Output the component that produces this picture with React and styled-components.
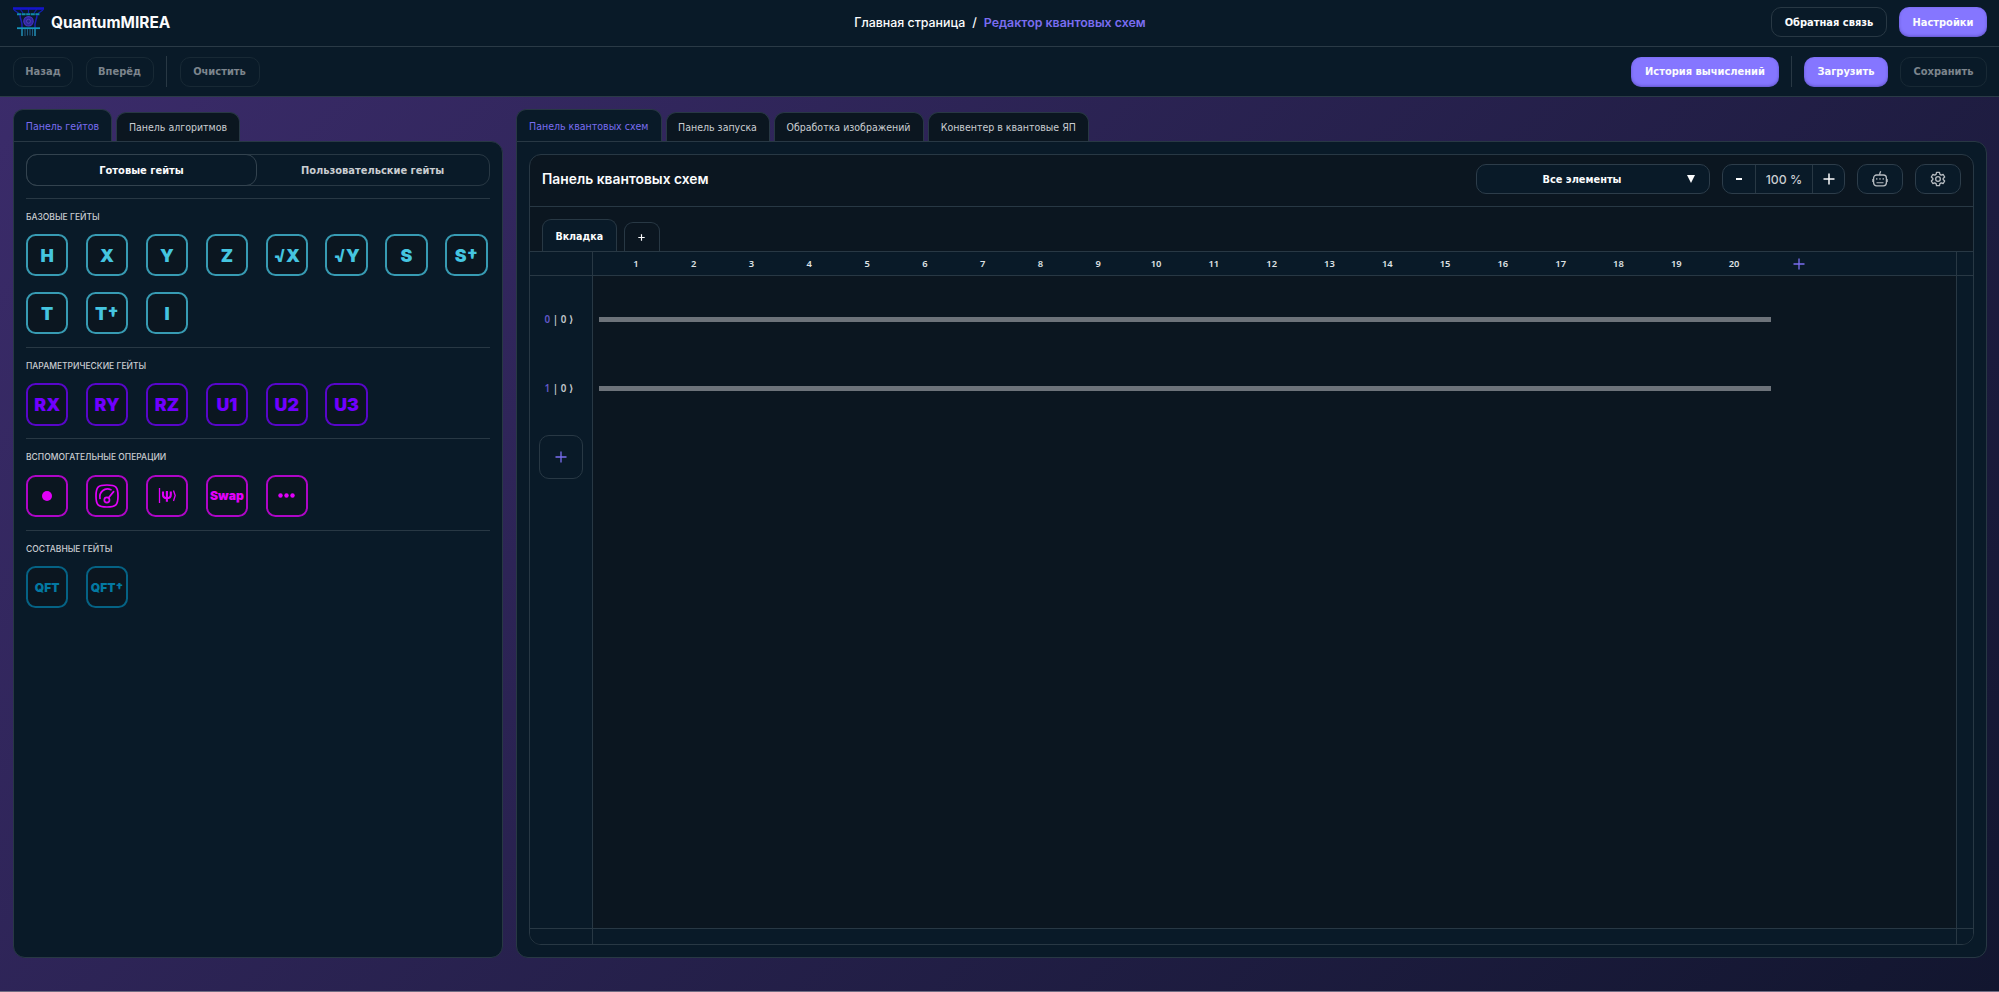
import React from "react";
import styled, { createGlobalStyle, ThemeProvider } from "styled-components";

const theme = {
  colors: {
    panel: "#091a28",
    dark: "#0b1620",
    border: "#283844",
    borderDim: "#182935",
    text: "#fbfcfd",
    textSoft: "#c9cdd1",
    textMuted: "#7c858d",
    accent: "#8576ff",
    link: "#7a6df0",
    wire: "#6d737a",
  },
  fonts: {
    main: '"Inter", sans-serif',
    control: '"DejaVu Sans Condensed", "DejaVu Sans", sans-serif',
    digits: '"Noto Sans", "DejaVu Sans", sans-serif',
  },
};

const GlobalStyle = createGlobalStyle`
  * {
    box-sizing: border-box;
  }
  body {
    margin: 0;
    overflow: hidden;
    background: #13152e;
  }
  button {
    margin: 0;
    padding: 0;
    font: inherit;
    color: inherit;
    background: none;
    border: none;
  }
`;

const Page = styled.div`
  display: flex;
  flex-direction: column;
  height: 992px;
  color: ${(props) => props.theme.colors.text};
  font-family: ${(props) => props.theme.fonts.main};
  background: linear-gradient(135deg, #3c2c6c 0%, #12162f 100%);
  border-bottom: 1px solid #6f6c83;
`;

const Header = styled.header`
  display: grid;
  grid-template-columns: 1fr auto 1fr;
  align-items: center;
  flex: none;
  height: 47px;
  padding: 0 12px 2px 13px;
  background: ${(props) => props.theme.colors.panel};
  border-bottom: 1px solid #2a3a46;
`;

const Brand = styled.div`
  display: flex;
  align-items: center;
  gap: 7px;
  font-size: 15.45px;
  font-weight: 700;
  svg {
    display: block;
  }
`;

const Crumbs = styled.nav`
  display: flex;
  gap: 7px;
  font-size: 12.4px;
  font-weight: 500;
`;

Crumbs.Current = styled.span`
  color: ${(props) => props.theme.colors.link};
  font-weight: 600;
`;

const Toolbar = styled.div`
  display: flex;
  align-items: center;
  justify-content: space-between;
  flex: none;
  height: 50px;
  padding: 0 12px 0 13px;
  background: ${(props) => props.theme.colors.panel};
  border-bottom: 1px solid #2a3a46;
`;

const Group = styled.div`
  display: flex;
  align-items: center;
  justify-content: ${(props) => (props.$end ? "flex-end" : "flex-start")};
  gap: ${(props) => (props.$end ? 12 : 12.5)}px;
`;

const Separator = styled.div`
  width: 1px;
  height: 31px;
  background: ${(props) => props.theme.colors.border};
`;

const Button = styled.button`
  width: ${(props) => props.$width}px;
  height: 30px;
  border: 1px solid ${(props) => props.theme.colors.border};
  border-radius: 10px;
  font-family: ${(props) => props.theme.fonts.control};
  font-size: 11px;
  font-weight: 700;
  white-space: nowrap;
  &:disabled {
    color: ${(props) => props.theme.colors.textMuted};
    border-color: ${(props) => props.theme.colors.borderDim};
  }
`;

const PrimaryButton = styled(Button)`
  border: none;
  background: ${(props) => props.theme.colors.accent};
  box-shadow: inset 0 -1px 3px rgba(30, 20, 90, 0.35);
`;

const Main = styled.main`
  display: flex;
  flex: 1;
  gap: 13px;
  padding: 12px 12px 33px 13px;
  min-height: 0;
`;

const Column = styled.section`
  display: flex;
  flex-direction: column;
  flex: ${(props) => (props.$width ? "none" : 1)};
  width: ${(props) => (props.$width ? `${props.$width}px` : "auto")};
  min-width: 0;
`;

const Tabs = styled.div`
  display: flex;
  align-items: flex-end;
  gap: 4px;
  height: 32px;
`;

const Tab = styled.button`
  width: ${(props) => props.$width}px;
  height: ${(props) => (props.$active ? 32 : 29)}px;
  border: 1px solid ${(props) => props.theme.colors.border};
  border-bottom: none;
  border-radius: 10px 10px 0 0;
  background: ${(props) => (props.$active ? props.theme.colors.panel : props.theme.colors.dark)};
  color: ${(props) => (props.$active ? props.theme.colors.link : props.theme.colors.textSoft)};
  font-family: ${(props) => props.theme.fonts.control};
  font-size: 10.5px;
  white-space: nowrap;
`;

const Panel = styled.div`
  display: flex;
  flex-direction: column;
  flex: 1;
  min-height: 0;
  padding: 12px;
  background: ${(props) => props.theme.colors.panel};
  border: 1px solid ${(props) => props.theme.colors.border};
  border-radius: 0 12px 12px 12px;
`;

const Switcher = styled.div`
  display: flex;
  flex: none;
  height: 32px;
  margin-bottom: 11.5px;
  border: 1px solid ${(props) => props.theme.colors.border};
  border-radius: 11px;
`;

Switcher.Item = styled.button`
  flex: ${(props) => (props.$active ? "0 0 231px" : 1)};
  margin: -1px;
  border: 1px solid ${(props) => (props.$active ? "#33434f" : "transparent")};
  border-radius: 11px;
  color: ${(props) => (props.$active ? props.theme.colors.text : props.theme.colors.textSoft)};
  font-family: ${(props) => props.theme.fonts.control};
  font-size: 11px;
  font-weight: 700;
`;

const GateSection = styled.div`
  padding: 12px 0 12.5px;
  border-top: 1px solid ${(props) => props.theme.colors.border};
`;

GateSection.Title = styled.div`
  height: 23.5px;
  line-height: 12px;
  color: ${(props) => props.theme.colors.textSoft};
  font-size: 8.5px;
  font-weight: 500;
  white-space: nowrap;
`;

const Gates = styled.div`
  display: grid;
  grid-template-columns: repeat(8, 42.4px);
  grid-auto-rows: 42.4px;
  gap: 15.5px 17.5px;
`;

const Gate = styled.button`
  display: flex;
  align-items: center;
  justify-content: center;
  border: 2px solid color-mix(in srgb, ${(props) => props.$color} 76%, #0a1824);
  border-radius: 9.5px;
  background: ${(props) => props.theme.colors.dark};
  color: ${(props) => props.$color};
  font-size: ${(props) => props.$size ?? 17.8}px;
  font-weight: 900;
  white-space: nowrap;
`;

const Circuit = styled.div`
  display: flex;
  flex-direction: column;
  flex: 1;
  min-height: 0;
  overflow: hidden;
  background: ${(props) => props.theme.colors.dark};
  border: 1px solid ${(props) => props.theme.colors.border};
  border-radius: 12px;
`;

Circuit.Head = styled.div`
  display: flex;
  align-items: center;
  justify-content: space-between;
  flex: none;
  height: 52px;
  padding: 0 12px 3px;
  border-bottom: 1px solid ${(props) => props.theme.colors.border};
`;

Circuit.Title = styled.div`
  font-size: 13.85px;
  font-weight: 600;
`;

Circuit.Tools = styled.div`
  display: flex;
  gap: 12px;
`;

const Select = styled.button`
  display: grid;
  grid-template-columns: 1fr auto;
  align-items: center;
  width: 234px;
  height: 30px;
  padding: 0 14px 0 0;
  background: ${(props) => props.theme.colors.panel};
  border: 1px solid #2d3d4a;
  border-radius: 10px;
  font-family: ${(props) => props.theme.fonts.control};
  font-size: 10.9px;
  font-weight: 700;
`;

const Zoom = styled.div`
  display: grid;
  grid-template-columns: 32px 58px 31px;
  height: 30px;
  width: 123px;
  background: ${(props) => props.theme.colors.panel};
  border: 1px solid #2d3d4a;
  border-radius: 10px;
  > * {
    display: flex;
    align-items: center;
    justify-content: center;
  }
`;

Zoom.Value = styled.div`
  border: solid ${(props) => props.theme.colors.border};
  border-width: 0 1px;
  color: ${(props) => props.theme.colors.textSoft};
  font-size: 12.3px;
  font-weight: 500;
`;

const IconButton = styled.button`
  display: flex;
  align-items: center;
  justify-content: center;
  width: 46px;
  height: 30px;
  background: ${(props) => props.theme.colors.panel};
  border: 1px solid #2d3d4a;
  border-radius: 10px;
  color: #b6bbc0;
`;

const CircuitTabs = styled.div`
  display: flex;
  align-items: flex-end;
  gap: 7px;
  flex: none;
  height: 45px;
  padding: 0 12px;
  border-bottom: 1px solid ${(props) => props.theme.colors.border};
`;

const CircuitTab = styled.button`
  width: ${(props) => props.$width}px;
  height: ${(props) => (props.$active ? 32 : 29)}px;
  border: 1px solid ${(props) => props.theme.colors.border};
  border-bottom: none;
  border-radius: 9px 9px 0 0;
  background: ${(props) => (props.$active ? props.theme.colors.panel : "transparent")};
  font-family: ${(props) => props.theme.fonts.control};
  font-size: 10.6px;
  font-weight: 700;
`;

/* ruler, wires and the bottom strip share one set of columns */
const Board = styled.div`
  display: grid;
  grid-template-columns: 63px 1fr 17px;
  grid-template-rows: 24px 1fr 16px;
  flex: 1;
  min-height: 0;
`;

const Strip = styled.div`
  background: ${(props) => props.theme.colors.panel};
  border: 0 solid ${(props) => props.theme.colors.border};
  border-width: ${(props) => props.$borders};
`;

const Ruler = styled(Strip)`
  display: flex;
  align-items: center;
  padding-left: 14px;
`;

Ruler.Cell = styled.div`
  width: 57.8px;
  text-align: center;
  color: #dfe2e4;
  font-family: ${(props) => props.theme.fonts.digits};
  font-size: 9.4px;
  font-weight: 600;
  line-height: 12px;
`;

Ruler.Add = styled.button`
  display: flex;
  margin-left: 30px;
  color: ${(props) => props.theme.colors.link};
`;

const Qubits = styled(Strip)`
  display: flex;
  flex-direction: column;
  align-items: center;
  padding-top: 9.5px;
`;

const Qubit = styled.div`
  display: flex;
  align-items: center;
  justify-content: center;
  gap: 2.6px;
  width: 100%;
  height: 68.7px;
  padding-right: 4px;
  color: #c4c8cc;
  font-family: ${(props) => props.theme.fonts.digits};
  font-size: 9.8px;
  font-weight: 600;
  line-height: 12px;
`;

Qubit.Index = styled.span`
  color: #6258c8;
`;

const AddQubit = styled.button`
  display: flex;
  align-items: center;
  justify-content: center;
  width: 44px;
  height: 44px;
  margin-top: 12.5px;
  border: 1px solid ${(props) => props.theme.colors.border};
  border-radius: 10px;
  color: ${(props) => props.theme.colors.link};
`;

const Wires = styled.div`
  display: flex;
  flex-direction: column;
  gap: 64px;
  padding: 41px 0 0 6px;
`;

const Wire = styled.div`
  width: 1172px;
  height: 5px;
  background: ${(props) => props.theme.colors.wire};
`;

const GATE_SECTIONS = [
  {
    title: "БАЗОВЫЕ ГЕЙТЫ",
    color: "#45c5e0",
    gates: ["H", "X", "Y", "Z", "√X", "√Y", "S", "S†", "T", "T†", "I"],
  },
  {
    title: "ПАРАМЕТРИЧЕСКИЕ ГЕЙТЫ",
    color: "#7000ff",
    gates: ["RX", "RY", "RZ", "U1", "U2", "U3"],
  },
  {
    title: "ВСПОМОГАТЕЛЬНЫЕ ОПЕРАЦИИ",
    color: "#e200fa",
    gates: ["control", "measure", "psi", "Swap", "more"],
  },
  { title: "СОСТАВНЫЕ ГЕЙТЫ", color: "#0379a2", gates: ["QFT", "QFT†"] },
];

const GATE_SIZES = { Swap: 12.2, QFT: 12, "QFT†": 12 };

const COLUMNS = Array.from({ length: 20 }, (_, i) => i + 1);

const Logo = () => (
  <svg width="31" height="30" viewBox="0 0 31 30" fill="none">
    <path d="M0 1.5h31" stroke="#1515cc" strokeWidth="2.6" />
    <path d="M1 3l5 3.5M30 3l-5 3.5M7 2l3 4M24 2l-3 4M15.5 2v4" stroke="#1420b0" strokeWidth="1.2" />
    <path d="M4 7.2h23" stroke="#118cac" strokeWidth="2" strokeDasharray="4 0.6" />
    <path d="M7 8c0 5 3 7 2 13M24 8c0 5-3 7-2 13" stroke="#1b20b4" strokeWidth="1.5" />
    <circle cx="15.5" cy="14.3" r="4.7" fill="#30259b" stroke="#4535bd" strokeWidth="1.2" />
    <circle cx="15.5" cy="14.3" r="2" fill="#22277f" stroke="#5848c6" strokeWidth="0.8" />
    <path d="M4 21.2h23" stroke="#1695bb" strokeWidth="1.8" />
    <path d="M9 22v7M22 22v7" stroke="#218fb5" strokeWidth="1.5" />
    <path d="M12 22v7M14.5 22v6.5M17 22v6.5M19.5 22v7" stroke="#205b80" strokeWidth="1" />
  </svg>
);

const Plus = ({ size = 12, width = 1.3 }) => (
  <svg width={size} height={size} viewBox="0 0 12 12" stroke="currentColor" strokeWidth={width}>
    <path d="M6 0.5v11M0.5 6h11" />
  </svg>
);

const Gauge = () => (
  <svg width="24" height="24" viewBox="0 0 24 24" fill="none" stroke="currentColor" strokeWidth="1.7">
    <path d="M12 1c9 0 11 2 11 11s-2 11-11 11S1 21 1 12 3 1 12 1z" />
    <path d="M5 14.500C3.800 8 9.500 3.200 16 5.700M13.600 13.800l5-6.200" strokeLinecap="round" />
    <circle cx="11.900" cy="16" r="2.600" />
  </svg>
);

const Psi = () => (
  <svg width="18" height="17" viewBox="0 0 18 17" fill="none" stroke="currentColor">
    <path d="M1.500 1v15" strokeWidth="1.300" />
    <path d="M5 4.500v3.300c0 2.300 1.300 3.400 3.900 3.400s3.900-1.100 3.900-3.400V4.500M8.900 4v10.800" strokeWidth="2.100" />
    <path d="M15.500 3.500l1.700 5-1.700 5.500" strokeWidth="1.300" />
  </svg>
);

const Dots = () => (
  <svg width="17" height="5" viewBox="0 0 17 5" fill="currentColor">
    <circle cx="2.500" cy="2.500" r="2.200" />
    <circle cx="8.500" cy="2.500" r="2.200" />
    <circle cx="14.500" cy="2.500" r="2.200" />
  </svg>
);

const Dot = () => (
  <svg width="10" height="10" viewBox="0 0 10 10" fill="currentColor">
    <circle cx="5" cy="5" r="5" />
  </svg>
);

const Robot = () => (
  <svg width="16" height="16" viewBox="0 0 16 16" fill="none" stroke="currentColor" strokeWidth="1.300">
    <rect x="1.600" y="4" width="12.800" height="10.800" rx="3" />
    <path d="M7.800 4V2.500l.9-2.200" />
    <path d="M4.800 7v1.800M8 7v1.800M11.200 7v1.800M4.500 11.700h7M.8 8v3M15.200 8v3" strokeWidth="1.100" />
  </svg>
);

const Gear = () => (
  <svg
    width="16"
    height="16"
    viewBox="0 0 24 24"
    fill="none"
    stroke="currentColor"
    strokeWidth="2"
    strokeLinejoin="round"
  >
    <path d="M9.800 2h4.400l.7 3.100 1.900 1.100 3-.95 2.200 3.800-2.300 2.150v1.600l2.300 2.150-2.200 3.800-3-.95-1.900 1.100-.7 3.100H9.800l-.7-3.100-1.900-1.100-3 .95-2.200-3.800 2.300-2.150v-1.600L2 9.050l2.200-3.800 3 .95 1.900-1.100z" />
    <circle cx="12" cy="12" r="3.500" />
  </svg>
);

const Arrow = () => (
  <svg width="8" height="8" viewBox="0 0 8 8" fill="currentColor">
    <path d="M0 0h8L4 8z" />
  </svg>
);

const GATE_ICONS = { control: Dot, measure: Gauge, psi: Psi, more: Dots };

function GatePanel() {
  return (
    <Column $width={490}>
      <Tabs>
        <Tab $active $width={99}>
          Панель гейтов
        </Tab>
        <Tab $width={124}>Панель алгоритмов</Tab>
      </Tabs>
      <Panel>
        <Switcher>
          <Switcher.Item $active>Готовые гейты</Switcher.Item>
          <Switcher.Item>Пользовательские гейты</Switcher.Item>
        </Switcher>
        {GATE_SECTIONS.map((section) => (
          <GateSection key={section.title}>
            <GateSection.Title>{section.title}</GateSection.Title>
            <Gates>
              {section.gates.map((gate) => {
                const Icon = GATE_ICONS[gate];
                return (
                  <Gate key={gate} $color={section.color} $size={GATE_SIZES[gate]}>
                    {Icon ? <Icon /> : gate}
                  </Gate>
                );
              })}
            </Gates>
          </GateSection>
        ))}
      </Panel>
    </Column>
  );
}

function CircuitPanel() {
  return (
    <Column>
      <Tabs>
        <Tab $active $width={145.5}>
          Панель квантовых схем
        </Tab>
        <Tab $width={104}>Панель запуска</Tab>
        <Tab $width={150}>Обработка изображений</Tab>
        <Tab $width={161.5}>Конвентер в квантовые ЯП</Tab>
      </Tabs>
      <Panel>
        <Circuit>
          <Circuit.Head>
            <Circuit.Title>Панель квантовых схем</Circuit.Title>
            <Circuit.Tools>
              <Select>
                <span>Все элементы</span>
                <Arrow />
              </Select>
              <Zoom>
                <button>
                  <svg width="6" height="2" viewBox="0 0 6 2" fill="currentColor">
                    <path d="M0 0h6v2H0z" />
                  </svg>
                </button>
                <Zoom.Value>100 %</Zoom.Value>
                <button>
                  <Plus width={1.5} />
                </button>
              </Zoom>
              <IconButton>
                <Robot />
              </IconButton>
              <IconButton>
                <Gear />
              </IconButton>
            </Circuit.Tools>
          </Circuit.Head>
          <CircuitTabs>
            <CircuitTab $active $width={74.5}>
              Вкладка
            </CircuitTab>
            <CircuitTab $width={36}>
              <Plus size={7} width={2} />
            </CircuitTab>
          </CircuitTabs>
          <Board>
            <Strip $borders="0 1px 1px 0" />
            <Ruler $borders="0 0 1px 0">
              {COLUMNS.map((n) => (
                <Ruler.Cell key={n}>{n}</Ruler.Cell>
              ))}
              <Ruler.Add>
                <Plus />
              </Ruler.Add>
            </Ruler>
            <Strip $borders="0 0 1px 1px" />
            <Qubits $borders="0 1px 0 0">
              {[0, 1].map((index) => (
                <Qubit key={index}>
                  <Qubit.Index>{index}</Qubit.Index>
                  <span>|</span>
                  <span>0</span>
                  <span>⟩</span>
                </Qubit>
              ))}
              <AddQubit>
                <Plus />
              </AddQubit>
            </Qubits>
            <Wires>
              <Wire />
              <Wire />
            </Wires>
            <Strip $borders="0 0 0 1px" />
            <Strip $borders="1px 1px 0 0" />
            <Strip $borders="1px 0 0 0" />
            <Strip $borders="1px 0 0 1px" />
          </Board>
        </Circuit>
      </Panel>
    </Column>
  );
}

export default function App() {
  return (
    <ThemeProvider theme={theme}>
      <GlobalStyle />
      <Page>
        <Header>
          <Brand>
            <Logo />
            QuantumMIREA
          </Brand>
          <Crumbs>
            <span>Главная страница</span>
            <span>/</span>
            <Crumbs.Current>Редактор квантовых схем</Crumbs.Current>
          </Crumbs>
          <Group $end>
            <Button $width={116}>Обратная связь</Button>
            <PrimaryButton $width={88}>Настройки</PrimaryButton>
          </Group>
        </Header>
        <Toolbar>
          <Group>
            <Button disabled $width={60}>
              Назад
            </Button>
            <Button disabled $width={68}>
              Вперёд
            </Button>
            <Separator />
            <Button disabled $width={80}>
              Очистить
            </Button>
          </Group>
          <Group $end>
            <PrimaryButton $width={148}>История вычислений</PrimaryButton>
            <Separator />
            <PrimaryButton $width={84}>Загрузить</PrimaryButton>
            <Button disabled $width={87}>
              Сохранить
            </Button>
          </Group>
        </Toolbar>
        <Main>
          <GatePanel />
          <CircuitPanel />
        </Main>
      </Page>
    </ThemeProvider>
  );
}
